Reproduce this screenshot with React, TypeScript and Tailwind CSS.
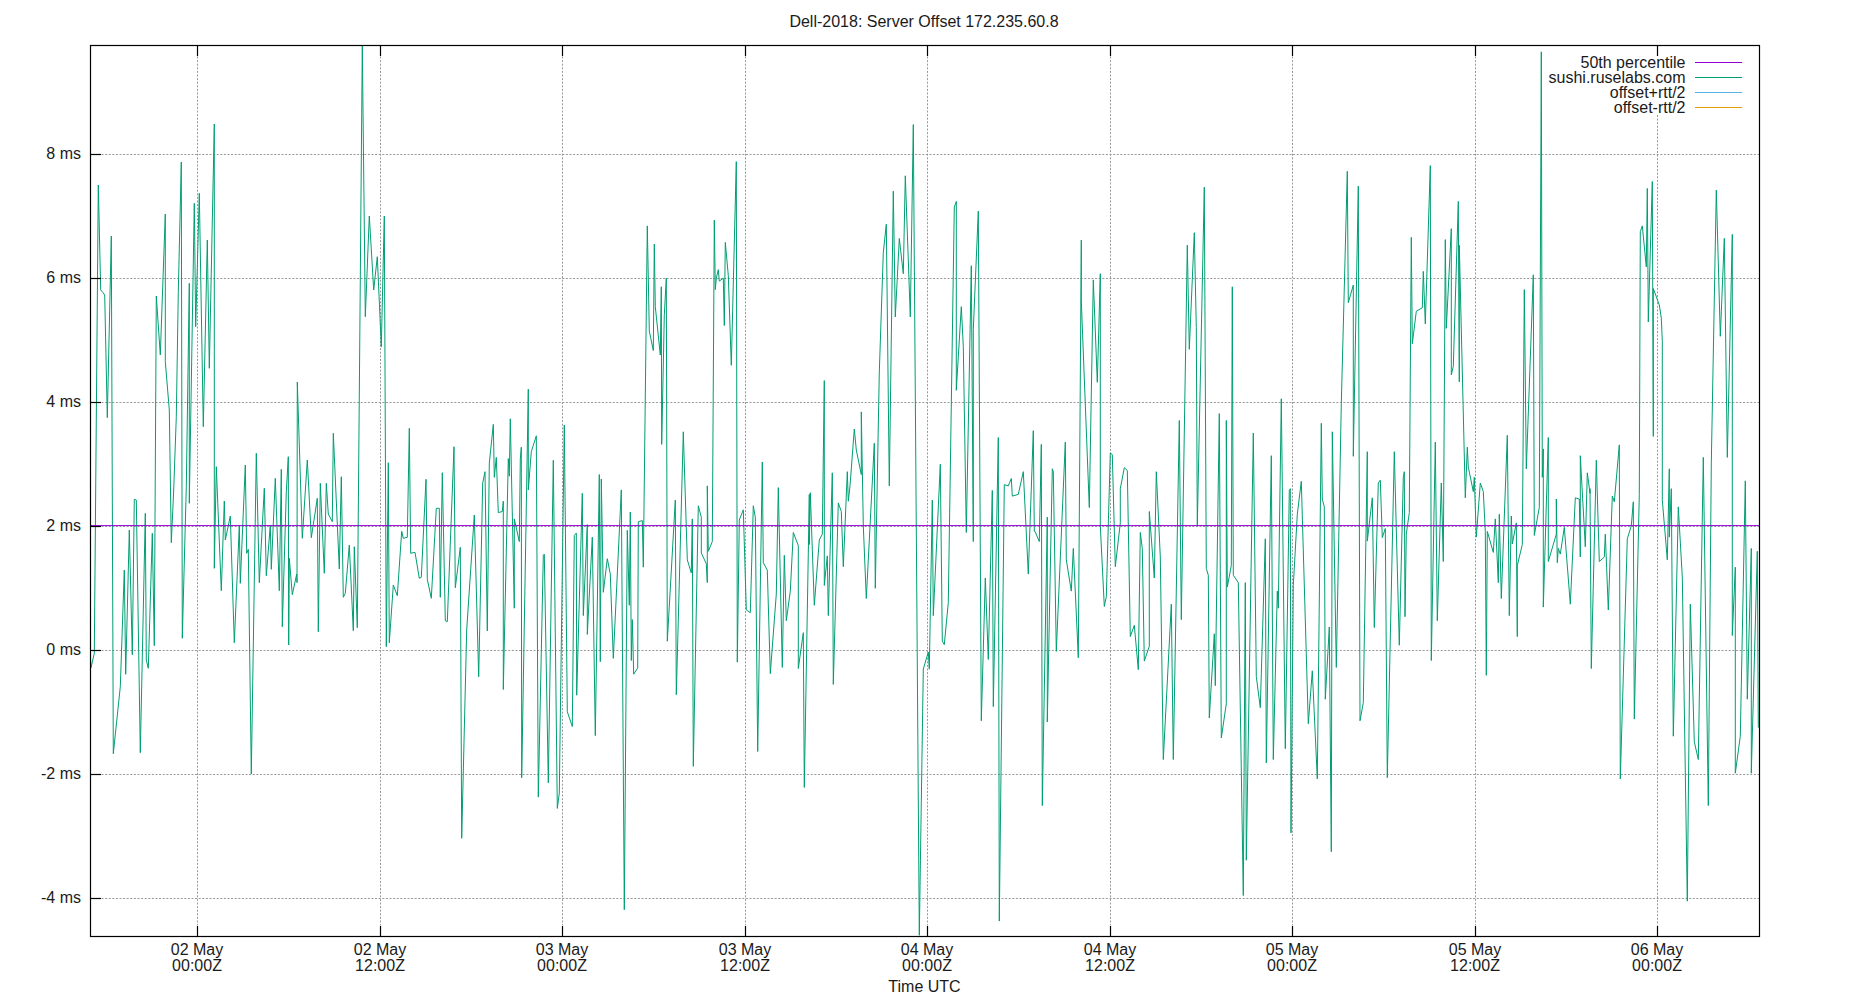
type Pt = [number, number];

// Series points read from the plot; each section has its own origin and scale.
const sectionA: Pt[] = [
  [30,1830],[33,1883],[43,1840],[55,435],[62,750],[68,757],[74,765],[82,1133],[94,588],[100,2141],[121,1940],[133,1590],[137,1903],[148,1470],[157,1844],[163,1378],[169,1380],[181,2138],[196,1420],[199,1860],[205,1885],[217,1480],[223,1817],[229,768],[241,945],[256,522],[256,965],[268,1110],[274,1508],[281,1350],[289,1130],[295,755],[304,366],[307,1795],[319,1340],[328,730],[328,1390],[343,490],[347,860],[358,460],[370,1160],[382,600],[388,985],[403,252],[403,1585],[409,1280],[424,1652],[433,1383],[436,1500],[451,1428],[463,1808],[478,1457],[481,1630],[496,1275],[500,1540],[505,1528],[514,2202],[529,1240],[538,1628],[553,1345],[559,1607],[571,1455],[574,1588],[586,1315],[598,1652],[604,1288],[607,1760],[619,1355],[625,1250],[626,1815],[628,1555],[637,1664],[650,1602],[651,1628],[652,1026],[667,1495],[682,1260],[694,1493],[712,1375],[715,1775],[721,1330],[733,1600],[739,1330],[745,1422],[757,1445],[760,1180],[778,1587],[784,1310],[790,1672],[796,1660],[808,1515],[820,1772],[823,1520],[832,1763],[847,16],[856,830],[868,528],[881,750],[892,650],[904,920],[913,528],[919,1820],[925,1268],[928,1808],[940,1635],[952,1667],[965,1474],[970,1495],[982,1492],[988,1165],[992,1540],[1005,1537],[1018,1615],[1024,1612],[1038,1318],[1042,1618],[1054,1675],[1069,1405],[1078,1405],[1081,1672],[1087,1298],[1096,1742],[1102,1745],[1122,1220],[1126,1643],[1141,1522],[1145,2395],[1160,1770],[1183,1425],[1196,1910],
];

const sections: { x0: number; pts: Pt[] }[] = [
  { x0: 480, pts: [[8,770],[15,750],[22,1030],[28,735],[40,667],[43,760],[49,725],[55,822],[67,820],[70,802],[70,1133],[85,727],[88,758],[91,657],[103,990],[103,833],[118,873],[121,728],[124,707],[125,1288],[145,605],[145,782],[154,715],[169,687],[175,1322],[190,897],[193,895],[205,1297],[220,730],[232,1342],[238,1315],[253,668],[262,1172],[277,1198],[283,862],[289,858],[290,1143],[307,788],[310,1003],[322,843],[322,1036],[337,865],[346,1214],[358,755],[361,1084],[364,763],[370,962],[382,903],[391,930],[400,1078],[424,782],[433,1520],[442,853],[448,985],[451,821],[454,1082],[457,1010],[461,1106],[473,1095],[475,838],[487,836],[490,918],[502,318],[508,503],[520,537],[523,350],[526,460],[541,545],[544,425],[545,702],[553,475]] },
  { x0: 665, pts: [[4,410],[7,1048],[31,800],[34,1142],[55,680],[67,905],[79,928],[82,833],[85,1268],[100,810],[109,830],[109,893],[124,912],[127,945],[127,775],[130,890],[142,873],[148,308],[151,430],[154,410],[160,395],[163,415],[175,410],[178,493],[181,347],[190,405],[199,563],[214,205],[217,1085],[223,835],[235,817],[244,993],[256,998],[265,810],[271,830],[278,1242],[292,733],[295,910],[307,923],[316,1105],[334,965],[340,778],[352,1094],[358,897],[364,1012],[376,960],[385,857],[400,880],[400,1096],[415,1033],[418,1305],[433,790],[433,878],[436,787],[448,985],[463,870],[472,860],[478,590],[478,950],[487,898],[490,1003],[502,752],[505,1124],[520,805],[529,820],[535,917],[547,750],[550,802],[555,775]] },
  { x0: 850, pts: [[13,675],[19,712],[34,755],[34,645],[40,845],[49,973],[73,700],[76,955],[88,575],[100,365],[109,315],[118,775],[130,257],[136,478],[148,340],[160,402],[166,230],[181,478],[190,140],[208,1565],[220,1097],[235,1067],[238,1097],[247,800],[250,1003],[271,737],[277,1048],[283,1054],[295,980],[313,285],[319,275],[319,607],[334,460],[340,530],[349,857],[364,388],[370,873],[370,500],[385,292],[394,1188],[406,937],[415,1080],[427,783],[430,1163],[445,690],[448,1540],[463,773],[475,775],[484,762],[487,793],[505,790],[520,750],[535,930],[550,678],[553,855]] },
  { x0: 1035, pts: [[0,855],[13,873],[19,702],[22,1337],[37,830],[37,1190],[52,745],[55,750],[64,1066],[91,698],[94,905],[109,960],[115,885],[130,1077],[139,343],[139,450],[163,813],[175,413],[187,593],[196,402],[196,845],[208,987],[214,970],[226,717],[232,720],[241,917],[256,840],[256,780],[268,743],[277,748],[286,1040],[298,1020],[310,1098],[316,857],[322,885],[328,1083],[343,1057],[343,820],[358,937],[364,750],[376,900],[385,1256],[409,983],[415,1256],[433,660],[439,1010],[457,352],[463,535],[478,330],[484,497],[487,845],[508,250],[514,920],[520,932],[523,1183],[538,1035],[541,1126],[553,648]] },
  { x0: 1220, pts: [[4,1218],[19,1158],[19,660],[22,953],[34,915],[37,425],[40,932],[55,945],[70,1495],[76,945],[79,1433],[100,682],[109,1110],[121,1165],[136,868],[139,1262],[154,722],[160,1256],[172,960],[175,990],[184,622],[196,1237],[208,783],[211,780],[213,1385],[220,950],[232,825],[244,767],[265,1193],[277,1100],[292,1290],[304,665],[307,798],[313,812],[316,1150],[328,1023],[334,1418],[337,680],[349,1094],[364,630],[382,222],[385,453],[400,422],[400,723],[415,248],[420,1188],[430,1156],[442,715],[442,872],[457,796],[463,1024],[475,770],[481,765],[487,866],[496,850],[502,1288],[523,715],[538,1055],[550,760],[553,750]] },
  { x0: 1405, pts: [[0,1005],[4,860],[13,822],[19,338],[22,525],[34,468],[52,462],[55,398],[61,490],[76,212],[79,1082],[91,698],[97,1012],[109,770],[115,908],[121,342],[124,498],[139,323],[139,580],[145,565],[160,275],[163,592],[163,352],[181,796],[187,707],[190,742],[205,785],[208,760],[214,865],[226,770],[235,785],[241,855],[244,1108],[247,855],[265,892],[271,833],[280,945],[283,825],[289,973],[307,686],[313,1003],[319,828],[322,877],[334,840],[337,1040],[337,915],[352,878],[358,430],[364,745],[385,404],[388,862],[403,813],[409,12],[412,760],[415,710],[415,988],[430,690],[430,908],[454,860],[454,798],[457,910],[460,885],[466,895],[478,848],[496,983],[511,796],[523,798],[526,900],[526,722],[541,882],[547,752],[555,788]] },
  { x0: 1590, pts: [[0,780],[4,1096],[19,730],[28,908],[43,900],[46,860],[55,993],[67,793],[73,803],[88,703],[91,1290],[112,868],[124,845],[130,803],[133,1185],[148,790],[151,328],[157,318],[169,390],[172,252],[175,487],[187,240],[190,688],[190,428],[208,457],[214,480],[217,520],[217,800],[232,905],[238,745],[238,865],[244,780],[250,1215],[265,812],[277,935],[292,1505],[301,983],[313,1225],[325,1256],[340,725],[355,1337],[364,735],[379,255],[391,512],[403,340],[412,725],[427,333],[427,1038],[436,918],[436,1280],[451,1215],[466,766],[472,1150],[484,885],[484,1280],[502,890],[505,1200]] },
];

const seriesPoints = [
  ...sectionA.map(([x, y]) => `${(80 + x / 3).toFixed(1)},${(40 + y / 3).toFixed(1)}`),
  ...sections.flatMap((s) =>
    s.pts.map(([x, y]) => `${(s.x0 + x / 3).toFixed(1)},${(45 + (y * 892) / 1568).toFixed(1)}`),
  ),
].join(" ");

const L = 90.5;
const R = 1759.5;
const T = 45.5;
const B = 936.5;
const GRID = "#999999";
const DASH = "2 1.6";

const yTicks: [number, string][] = [
  [154.5, "8 ms"],
  [278.5, "6 ms"],
  [402.5, "4 ms"],
  [526.5, "2 ms"],
  [650.5, "0 ms"],
  [774.5, "-2 ms"],
  [898.5, "-4 ms"],
];

const xTicks: [number, string, string][] = [
  [197.5, "02 May", "00:00Z"],
  [380.5, "02 May", "12:00Z"],
  [562.5, "03 May", "00:00Z"],
  [745.5, "03 May", "12:00Z"],
  [927.5, "04 May", "00:00Z"],
  [1110.5, "04 May", "12:00Z"],
  [1292.5, "05 May", "00:00Z"],
  [1475.5, "05 May", "12:00Z"],
  [1657.5, "06 May", "00:00Z"],
];

const legend: [number, string, string][] = [
  [62.5, "50th percentile", "#9400d3"],
  [77.5, "sushi.ruselabs.com", "#009e73"],
  [92.5, "offset+rtt/2", "#56b4e9"],
  [107.5, "offset-rtt/2", "#e69f00"],
];

export default function App() {
  return (
    <div className="h-[1000px] w-[1850px] overflow-hidden bg-white">
      <svg
        width={1850}
        height={1000}
        viewBox="0 0 1850 1000"
        className="block font-['Liberation_Sans',Arial,sans-serif] text-[16px] fill-[#1a1a1a]"
      >
        <defs>
          <clipPath id="plot">
            <rect x={L} y={T} width={R - L} height={B - T} />
          </clipPath>
        </defs>

        {yTicks.map(([y]) => (
          <line key={y} x1={L + 11} x2={R} y1={y} y2={y} stroke={GRID} strokeWidth={1} strokeDasharray={DASH} />
        ))}
        {xTicks.map(([x]) => (
          <line
            key={x}
            x1={x}
            x2={x}
            y1={x === 1657.5 ? 115 : T + 11}
            y2={B - 11}
            stroke={GRID}
            strokeWidth={1}
            strokeDasharray={DASH}
          />
        ))}

        <g clipPath="url(#plot)" fill="none">
          <polyline points={seriesPoints} stroke="#009e73" strokeWidth={1} strokeLinejoin="miter" />
          <line x1={L} x2={R} y1={525.6} y2={525.6} stroke="#9400d3" strokeWidth={1} />
        </g>

        {yTicks.map(([y, label]) => (
          <g key={y}>
            <line x1={L} x2={L + 10.5} y1={y} y2={y} stroke="#000" strokeWidth={1.2} />
            <text x={81} y={y + 4} textAnchor="end">
              {label}
            </text>
          </g>
        ))}

        {xTicks.map(([x, a, b]) => (
          <g key={x}>
            <line x1={x} x2={x} y1={T} y2={T + 10.5} stroke="#000" strokeWidth={1.2} />
            <line x1={x} x2={x} y1={B - 10.5} y2={B} stroke="#000" strokeWidth={1.2} />
            <text x={x - 0.5} y={955} textAnchor="middle">
              {a}
            </text>
            <text x={x - 0.5} y={970.5} textAnchor="middle">
              {b}
            </text>
          </g>
        ))}

        {legend.map(([y, label, color]) => (
          <g key={label}>
            <text x={1685.5} y={y + 5} textAnchor="end">
              {label}
            </text>
            <line x1={1695} x2={1742} y1={y} y2={y} stroke={color} strokeWidth={1} />
          </g>
        ))}

        <rect x={L} y={T} width={R - L} height={B - T} fill="none" stroke="#000" strokeWidth={1.2} />

        <text x={924} y={27} textAnchor="middle">
          Dell-2018: Server Offset 172.235.60.8
        </text>
        <text x={924.5} y={992} textAnchor="middle">
          Time UTC
        </text>
      </svg>
    </div>
  );
}
